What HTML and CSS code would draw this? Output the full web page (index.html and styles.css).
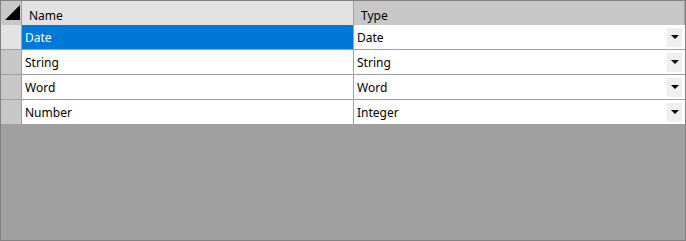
FILE: index.html
```html
<!DOCTYPE html>
<html>
<head>
<meta charset="utf-8">
<link rel="stylesheet" href="styles.css">
</head>
<body>
<div class="frame">
  <div class="grid">
    <div class="corner"><span class="tri"></span></div>
    <div class="colhead colhead-active">Name</div>
    <div class="colhead">Type</div>

    <div class="rowhead rowhead-active"></div>
    <div class="cell cell-selected">Date</div>
    <div class="cell combo"><span>Date</span><span class="drop"><span class="arrow"></span></span></div>

    <div class="rowhead"></div>
    <div class="cell">String</div>
    <div class="cell combo"><span>String</span><span class="drop"><span class="arrow"></span></span></div>

    <div class="rowhead"></div>
    <div class="cell">Word</div>
    <div class="cell combo"><span>Word</span><span class="drop"><span class="arrow"></span></span></div>

    <div class="rowhead"></div>
    <div class="cell">Number</div>
    <div class="cell combo"><span>Integer</span><span class="drop"><span class="arrow"></span></span></div>
  </div>
</div>
</body>
</html>
```

FILE: styles.css
```css
html, body {
  margin: 0;
  padding: 0;
}
body {
  font-family: "Noto Sans", "Open Sans", sans-serif;
  font-size: 12px;
  color: #000;
}
.frame {
  width: 686px;
  height: 241px;
  box-sizing: border-box;
  border: 1px solid #828282;
  background: #a0a0a0;
}
.grid {
  display: grid;
  grid-template-columns: 21px 332px 331px;
  grid-template-rows: 24px 25px 25px 25px 25px;
}
.corner, .colhead, .rowhead, .cell {
  box-sizing: border-box;
}
.corner {
  background: #c8c8c8;
  border-right: 1px solid #a0a0a0;
  position: relative;
}
.tri {
  position: absolute;
  left: 4px;
  top: 4px;
  width: 0;
  height: 0;
  border-left: 15px solid transparent;
  border-bottom: 15px solid #000;
}
.colhead {
  background: #c8c8c8;
  border-right: 1px solid #a0a0a0;
  padding-left: 7px;
  display: flex;
  align-items: center;
  padding-top: 4px;
}
.colhead-active {
  background: #e3e3e3;
}
.rowhead {
  background: #c8c8c8;
  border-right: 1px solid #a0a0a0;
  border-bottom: 1px solid #a0a0a0;
}
.rowhead-active {
  background: #e3e3e3;
}
.cell {
  background: #fff;
  border-right: 1px solid #a0a0a0;
  border-bottom: 1px solid #a0a0a0;
  padding-left: 3px;
  display: flex;
  align-items: center;
}
.cell:last-child, .combo {
  border-right: none;
}
.cell-selected {
  background: #0078d7;
  color: #fff;
}
.combo {
  justify-content: space-between;
  padding-right: 3px;
}
.drop {
  width: 15px;
  height: 19px;
  background: #efefef;
  display: flex;
  align-items: center;
  justify-content: center;
}
.arrow {
  width: 0;
  height: 0;
  border-left: 4px solid transparent;
  border-right: 4px solid transparent;
  border-top: 4px solid #000;
}
```
